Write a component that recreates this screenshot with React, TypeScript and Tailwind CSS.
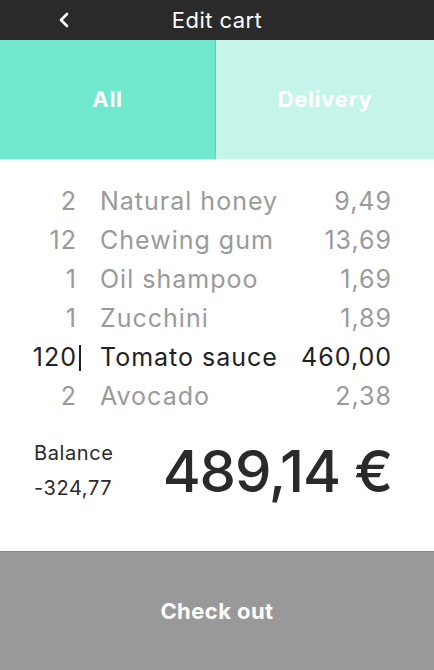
import { useState } from "react";

const items = [
  { qty: "2", name: "Natural honey", price: "9,49" },
  { qty: "12", name: "Chewing gum", price: "13,69" },
  { qty: "1", name: "Oil shampoo", price: "1,69" },
  { qty: "1", name: "Zucchini", price: "1,89" },
  { qty: "120", name: "Tomato sauce", price: "460,00", active: true },
  { qty: "2", name: "Avocado", price: "2,38" },
];

export default function App() {
  const [tab, setTab] = useState("all");

  return (
    <div className="w-[434px] h-[670px] flex flex-col bg-white font-['Inter',sans-serif]">
      {/* Barre du haut */}
      <div className="h-[40px] bg-[#2a2a2a] flex items-center relative">
        <button className="absolute left-[58px] top-[12px] text-white">
          <svg width="12" height="16" viewBox="0 0 12 16" fill="none">
            <path d="M9 2L3 8l6 6" stroke="white" strokeWidth="2.6" strokeLinecap="round" strokeLinejoin="round" />
          </svg>
        </button>
        <h1 className="w-full text-center text-white text-[22px] tracking-[0.02em] leading-none">Edit cart</h1>
      </div>

      {/* Onglets */}
      <div className="h-[119px] flex">
        <button
          onClick={() => setTab("all")}
          className="w-[216px] bg-[#6fe8cd] border-r border-[#5fcfb5] text-white font-bold text-[22px] tracking-[0.03em] flex items-center justify-center"
        >
          All
        </button>
        <button
          onClick={() => setTab("delivery")}
          className="flex-1 bg-[#c5f5ea] text-white font-bold text-[22px] tracking-[0.03em] flex items-center justify-center"
        >
          Delivery
        </button>
      </div>

      {/* Liste des produits */}
      <div className="flex-1 pt-[23px] flex flex-col">
        {items.map((it) => (
          <div
            key={it.name}
            className={
              "flex items-center h-[39px] text-[25px] tracking-[0.04em] whitespace-nowrap " +
              (it.active ? "text-[#222]" : "text-[#9a9a9a]")
            }
          >
            <div className="w-[77px] shrink-0 text-right relative">
              {it.qty}
              {it.active && (
                <span className="absolute right-[-4px] top-[6px] w-[2px] h-[26px] bg-[#222]" />
              )}
            </div>
            <div className="ml-[23px] flex-1 min-w-0">{it.name}</div>
            <div className="shrink-0 text-right mr-[42px]">{it.price}</div>
          </div>
        ))}

        {/* Total */}
        <div className="flex items-end justify-between mt-[20px] pl-[34px] pr-[42px] text-[#2a2a2a]">
          <div className="flex flex-col text-[20px] tracking-[0.03em] leading-[35px]">
            <span>Balance</span>
            <span>-324,77</span>
          </div>
          <div className="text-[58px] font-medium tracking-[-0.02em] leading-none pb-[6px] whitespace-nowrap">489,14 €</div>
        </div>
      </div>

      {/* Bouton commander */}
      <button className="h-[119px] bg-[#999] border-t border-[#888] text-white font-bold text-[22px] tracking-[0.02em] flex items-center justify-center">
        Check out
      </button>
      <span className="hidden">{tab}</span>
    </div>
  );
}
